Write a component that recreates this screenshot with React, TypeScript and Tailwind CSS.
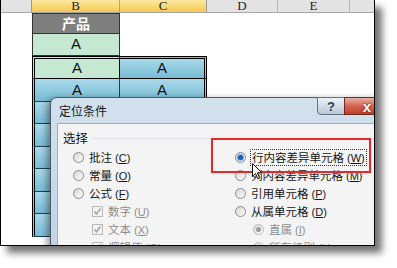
import React from 'react';

const cjk = "font-['Noto_Sans_CJK_SC','Noto_Sans',sans-serif]";
const blue = 'bg-linear-to-b from-[#a9d9ea] to-[#78bcd5]';
const green = 'bg-[#c4e8d2]';

function Key({ k }: { k: string }) {
  return (
    <span className="font-['Liberation_Sans',sans-serif] text-[11px] ml-[3px]">
      (<span className="underline">{k}</span>)
    </span>
  );
}

function Radio({ checked, disabled }: { checked?: boolean; disabled?: boolean }) {
  return (
    <span
      className={`w-[11px] h-[11px] shrink-0 rounded-full border flex items-center justify-center bg-linear-to-br from-[#d6d6d6] to-[#fdfdfd] ${
        disabled ? 'border-[#bcbcbc]' : 'border-[#8b8b8b]'
      }`}
    >
      {checked && (
        <span
          className={`w-[5px] h-[5px] rounded-full ${
            disabled ? 'bg-[#9d9d9d]' : 'bg-[#1b5cb0] shadow-[0_0_0_1px_#7fb0e0]'
          }`}
        />
      )}
    </span>
  );
}

function Check() {
  return (
    <span className="w-[11px] h-[11px] shrink-0 border border-[#b9b9b9] bg-[#f3f3f3] flex items-center justify-center">
      <svg width="9" height="9" viewBox="0 0 9 9">
        <path d="M1.5 4.5 L3.5 7 L7.5 1.5" fill="none" stroke="#a5a5a5" strokeWidth="1.6" />
      </svg>
    </span>
  );
}

function Row({
  ctrl,
  label,
  k,
  disabled,
  indent,
  focus,
}: {
  ctrl: React.ReactNode;
  label: string;
  k: string;
  disabled?: boolean;
  indent?: string;
  focus?: boolean;
}) {
  return (
    <div className={`h-[18px] flex items-center gap-[5px] ${indent ?? ''}`}>
      {ctrl}
      <span
        className={`${cjk} text-[11.5px] leading-[14px] whitespace-nowrap ${
          disabled ? 'text-[#8d8d8d]' : 'text-[#141414]'
        } ${focus ? 'outline-1 outline-dotted outline-[#333] px-[1px]' : ''}`}
      >
        {label}
        <Key k={k} />
      </span>
    </div>
  );
}

function Dialog() {
  return (
    <div className="absolute left-[49px] top-[97px] w-[342px] h-[170px] rounded-tl-[7px] border border-[#4f5a66] bg-linear-to-b from-[#d3e1ed] to-[#bfd2e4] shadow-[-3px_2px_7px_rgba(0,0,0,0.4)]">
      <div className="relative h-[25px] flex items-center pl-[8px]">
        <span className={`${cjk} text-[12px] text-[#1a1a1a]`}>定位条件</span>
        <div className="absolute left-[266px] top-[-1px] w-[28px] h-[18px] rounded-bl-[4px] border border-[#66737f] bg-linear-to-b from-[#edf2f7] to-[#b9c8d8] flex items-center justify-center">
          <span className="font-['Liberation_Sans',sans-serif] font-bold text-[13px] leading-none text-[#2c3a48]">?</span>
        </div>
        <div className="absolute left-[293px] top-[-1px] w-[46px] h-[18px] border border-[#6b2a22] bg-linear-to-b from-[#eab0a4] via-[#d4624f] to-[#c0402b] flex items-center justify-center">
          <span className="font-['Liberation_Sans',sans-serif] font-bold text-[15px] leading-none text-white [text-shadow:0_0_2px_#3a1010]">x</span>
        </div>
      </div>
      <div className="ml-[6px] h-[200px] border border-[#9fb0c2] bg-[#f4f4f4]">
        <div className="pt-[6px] pl-[5px] h-[22px] flex items-center gap-[4px]">
          <span className={`${cjk} text-[12.5px] leading-[16px] text-[#141414]`}>选择</span>
          <span className="flex-1 h-px bg-[#dcdfe3]" />
        </div>
        <div className="flex pl-[15px] mt-[2px]">
          <div className="w-[162px] flex flex-col">
            <Row ctrl={<Radio />} label="批注" k="C" />
            <Row ctrl={<Radio />} label="常量" k="O" />
            <Row ctrl={<Radio />} label="公式" k="F" />
            <Row ctrl={<Check />} label="数字" k="U" disabled indent="pl-[19px]" />
            <Row ctrl={<Check />} label="文本" k="X" disabled indent="pl-[19px]" />
            <Row ctrl={<Check />} label="逻辑值" k="G" disabled indent="pl-[19px]" />
          </div>
          <div className="flex flex-col">
            <Row ctrl={<Radio checked />} label="行内容差异单元格" k="W" focus />
            <Row ctrl={<Radio />} label="列内容差异单元格" k="M" />
            <Row ctrl={<Radio />} label="引用单元格" k="P" />
            <Row ctrl={<Radio />} label="从属单元格" k="D" />
            <Row ctrl={<Radio checked disabled />} label="直属" k="I" disabled indent="pl-[18px]" />
            <Row ctrl={<Radio disabled />} label="所有级别" k="L" disabled indent="pl-[18px]" />
          </div>
        </div>
      </div>
    </div>
  );
}

function Sheet() {
  const a = "font-['Liberation_Sans',sans-serif] text-[15px] text-[#111]";
  const bodyRows = [23, 22, 23, 22, 23, 22, 23];
  return (
    <div className="flex flex-col">
      <div className="h-[13px] flex bg-[#e3e3e3] border-b border-[#a8a8a8] font-['Liberation_Serif',serif] text-[13px] leading-[12px] text-[#222]">
        <div className="w-[31px] border-r border-[#9a9a9a]" />
        <div className="w-[88px] bg-linear-to-b from-[#fde8a0] to-[#f5c94a] border-r border-[#c9a443] flex justify-center">B</div>
        <div className="w-[87px] bg-linear-to-b from-[#fde8a0] to-[#f5c94a] border-r border-[#9a9a9a] flex justify-center">C</div>
        <div className="w-[71px] border-r border-[#b4b4b4] flex justify-center">D</div>
        <div className="w-[72px] border-r border-[#b4b4b4] flex justify-center">E</div>
        <div className="flex-1" />
      </div>
      <div className="h-[21px] flex">
        <div className="w-[31px]" />
        <div className={`w-[88px] bg-[#7f7f7f] border border-[#333] flex items-center justify-center ${cjk} text-[14px] font-bold text-white`}>
          产品
        </div>
      </div>
      <div className="h-[22px] flex">
        <div className="w-[31px]" />
        <div className={`w-[88px] ${green} border-x border-b border-[#333] flex items-center justify-center ${a}`}>A</div>
      </div>
      <div className="h-[23px] flex">
        <div className="w-[31px]" />
        <div className={`w-[88px] ${green} border-double border-black border-t-[3px] border-l-[3px] border-r border-b flex items-center justify-center ${a}`}>A</div>
        <div className={`w-[87px] ${blue} border-double border-black border-t-[3px] border-r-[3px] border-b flex items-center justify-center ${a}`}>A</div>
      </div>
      {bodyRows.map((h, i) => (
        <div key={i} className="flex" style={{ height: h }}>
          <div className="w-[31px]" />
          <div className={`w-[88px] ${blue} border-double border-black border-l-[3px] border-r border-b border-r-[#1f4050] border-b-[#1f4050] flex items-center justify-center ${a}`}>A</div>
          <div className={`w-[87px] ${blue} border-double border-black border-r-[3px] border-b border-b-[#1f4050] flex items-center justify-center ${a}`}>A</div>
        </div>
      ))}
    </div>
  );
}

export default function App() {
  return (
    <div className="w-[397px] h-[268px] bg-white overflow-hidden">
      <div className="relative w-[375px] h-[246px] bg-white border-x border-b border-black overflow-hidden shadow-[7px_7px_7px_rgba(0,0,0,0.55)]">
        <Sheet />
        <Dialog />
        <div className="absolute left-[210px] top-[138px] w-[160px] h-[35px] border-2 border-[#e12a2a] shadow-[0_0_2px_rgba(255,200,200,0.9)]" />
        <svg className="absolute left-[251px] top-[163px]" width="11" height="17" viewBox="0 0 11 17">
          <path d="M0.5 0.5 L0.5 13.5 L3.5 10.5 L5.8 15.8 L7.6 15 L5.4 9.8 L9.8 9.8 Z" fill="#fff" stroke="#111" strokeWidth="1" />
        </svg>
      </div>
    </div>
  );
}
